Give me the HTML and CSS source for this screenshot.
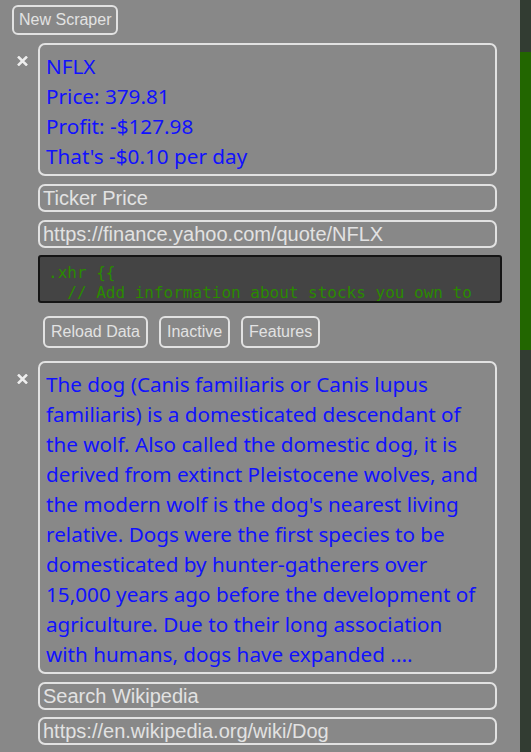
FILE: index.html
```html
<!DOCTYPE html>
<html>
<head>
<meta charset="utf-8">
<link rel="stylesheet" href="styles.css">
</head>
<body>
<div class="app">
  <button class="btn new-btn">New Scraper</button>

  <div class="scraper">
    <div class="close-col">
      <svg class="close" width="11" height="10" viewBox="0 0 11 10"><path d="M1 0.5 L10 9.5 M10 0.5 L1 9.5" stroke="#eeeeee" stroke-width="2.5" stroke-linecap="butt"/></svg>
    </div>
    <div class="main-col">
      <div class="card">NFLX<br>Price: 379.81<br>Profit: -$127.98<br>That's -$0.10 per day</div>
      <div class="field gap8">Ticker Price</div>
      <div class="field gap8">https://finance.yahoo.com/quote/NFLX</div>
      <div class="code">.xhr {{
  // Add information about stocks you own to</div>
      <div class="actions">
        <button class="btn act">Reload Data</button>
        <button class="btn act">Inactive</button>
        <button class="btn act">Features</button>
      </div>
    </div>
  </div>

  <div class="scraper second">
    <div class="close-col">
      <svg class="close" width="11" height="10" viewBox="0 0 11 10"><path d="M1 0.5 L10 9.5 M10 0.5 L1 9.5" stroke="#eeeeee" stroke-width="2.5" stroke-linecap="butt"/></svg>
    </div>
    <div class="main-col">
      <div class="card nowrap">The dog (Canis familiaris or Canis lupus<br>familiaris) is a domesticated descendant of<br>the wolf. Also called the domestic dog, it is<br>derived from extinct Pleistocene wolves, and<br>the modern wolf is the dog's nearest living<br>relative. Dogs were the first species to be<br>domesticated by hunter-gatherers over<br>15,000 years ago before the development of<br>agriculture. Due to their long association<br>with humans, dogs have expanded ....</div>
      <div class="field gap8">Search Wikipedia</div>
      <div class="field gap7">https://en.wikipedia.org/wiki/Dog</div>
    </div>
  </div>
</div>
<div class="scrollbar"><div class="thumb"></div></div>
</body>
</html>
```
FILE: styles.css
```css
html, body {
  margin: 0;
  padding: 0;
  background: #888888;
  overflow: hidden;
  height: 752px;
}

.app {
  width: 520px;
  padding: 5px 0 0 12px;
  box-sizing: border-box;
  font-family: "Liberation Sans", Arial, sans-serif;
}

.btn {
  display: inline-flex;
  align-items: center;
  background: transparent;
  border: 2px solid #e2e2e2;
  border-radius: 6px;
  color: #e2e2e2;
  font-family: "Liberation Sans", Arial, sans-serif;
  font-size: 16px;
  margin: 0;
  box-sizing: border-box;
}

.new-btn {
  height: 30px;
  padding: 0 5px;
}

.scraper {
  display: flex;
  margin-top: 8px;
}

.scraper.second {
  margin-top: 13px;
}

.close-col {
  width: 26px;
  flex: none;
}

.close {
  display: block;
  margin: 13px 0 0 5px;
}

.main-col {
  width: 464px;
  display: flex;
  flex-direction: column;
}

.card {
  width: 459px;
  box-sizing: border-box;
  border: 2px solid #e2e2e2;
  border-radius: 7px;
  padding: 6px 6px 3px 6px;
  color: #1111ff;
  font-family: "Noto Sans", "Open Sans", sans-serif;
  font-size: 20.7px;
  line-height: 30px;
}

.nowrap {
  white-space: nowrap;
}

.field {
  width: 459px;
  height: 28px;
  box-sizing: border-box;
  border: 2px solid #e2e2e2;
  border-radius: 7px;
  padding: 0 3px;
  color: #e2e2e2;
  font-size: 20px;
  line-height: 24px;
  white-space: nowrap;
  overflow: hidden;
}

.gap8 { margin-top: 8px; }
.gap7 { margin-top: 7px; }

.code {
  margin-top: 7px;
  width: 464px;
  height: 48px;
  box-sizing: border-box;
  background: #444444;
  border: 2px solid #151515;
  border-radius: 3px;
  padding: 6px 0 0 8px;
  color: #2a8a00;
  font-family: "DejaVu Sans Mono", "Liberation Mono", monospace;
  font-size: 16px;
  line-height: 20px;
  white-space: pre;
  overflow: hidden;
}

.actions {
  display: flex;
  gap: 11px;
  margin: 13px 0 0 5px;
}

.act {
  height: 32px;
  padding: 0 6px;
}

.scrollbar {
  position: fixed;
  top: 0;
  right: 0;
  width: 11px;
  height: 752px;
  background: #323c32;
}

.thumb {
  margin-top: 52px;
  height: 298px;
  background: #226600;
}
```
